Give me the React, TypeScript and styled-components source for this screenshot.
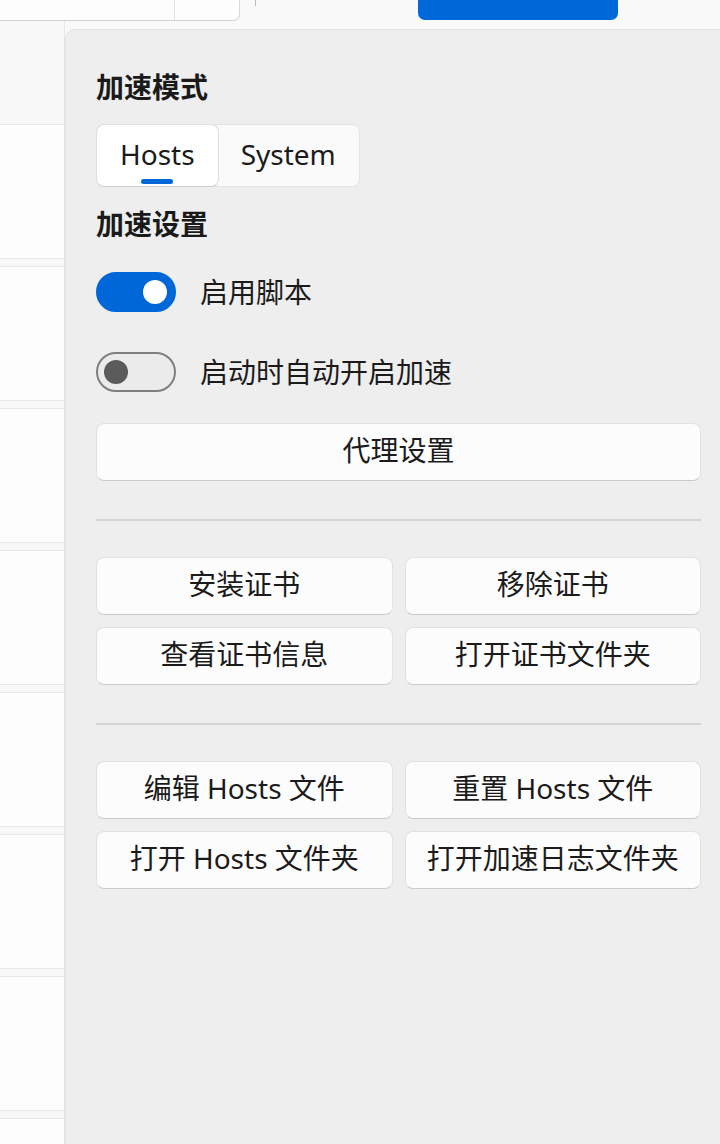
import React, { FC, useState } from "react";
import styled, { createGlobalStyle } from "styled-components";

const GlobalStyle = createGlobalStyle`
  html, body {
    margin: 0;
    padding: 0;
    background: #f9f9f9;
  }
  body {
    font-family: "Noto Sans", "Noto Sans CJK SC", sans-serif;
    color: #1b1b1b;
  }
  * {
    box-sizing: border-box;
  }
`;

const CERT_ACTIONS = ["安装证书", "移除证书", "查看证书信息", "打开证书文件夹"];
const HOSTS_ACTIONS = [
  "编辑 Hosts 文件",
  "重置 Hosts 文件",
  "打开 Hosts 文件夹",
  "打开加速日志文件夹",
];

interface ToggleProps {
  on: boolean;
  onToggle: () => void;
}

const Toggle: FC<ToggleProps> = ({ on, onToggle }) => (
  <Track $on={on} onClick={onToggle}>
    <Knob $on={on} />
  </Track>
);

const App: FC = () => {
  const [mode, setMode] = useState<"Hosts" | "System">("Hosts");
  const [scriptOn, setScriptOn] = useState(true);
  const [autoStart, setAutoStart] = useState(false);

  return (
    <>
      <GlobalStyle />
      <Page>
        <TopBar>
          <SearchBox>
            <SearchField />
          </SearchBox>
          <ToolSep />
          <PrimaryButton />
        </TopBar>

        <Body>
          <ListColumn>
            <ListHeader />
            {Array.from({ length: 8 }).map((_, i) => (
              <ListCard key={i} />
            ))}
          </ListColumn>

          <Panel>
            <Heading>加速模式</Heading>
            <Segmented>
              {(["Hosts", "System"] as const).map((m) => (
                <Segment
                  key={m}
                  $active={mode === m}
                  onClick={() => setMode(m)}
                >
                  {m}
                  {mode === m && <Indicator />}
                </Segment>
              ))}
            </Segmented>

            <Heading $top={20}>加速设置</Heading>
            <ToggleRow $top={31}>
              <Toggle on={scriptOn} onToggle={() => setScriptOn(!scriptOn)} />
              <span>启用脚本</span>
            </ToggleRow>
            <ToggleRow $top={40}>
              <Toggle on={autoStart} onToggle={() => setAutoStart(!autoStart)} />
              <span>启动时自动开启加速</span>
            </ToggleRow>

            <WideButton>代理设置</WideButton>

            <Divider />
            <ButtonGrid>
              {CERT_ACTIONS.map((label) => (
                <ActionButton key={label}>{label}</ActionButton>
              ))}
            </ButtonGrid>

            <Divider />
            <ButtonGrid>
              {HOSTS_ACTIONS.map((label) => (
                <ActionButton key={label}>{label}</ActionButton>
              ))}
            </ButtonGrid>
          </Panel>
        </Body>
      </Page>
    </>
  );
};

export default App;

const Page = styled.div`
  height: 100vh;
  display: flex;
  flex-direction: column;
  background: #f9f9f9;
  overflow: hidden;
`;

const TopBar = styled.div`
  height: 21px;
  display: flex;
  align-items: flex-end;
  overflow: hidden;
  flex-shrink: 0;
`;

const SearchBox = styled.div`
  width: 240px;
  height: 44px;
  display: flex;
  background: #fdfdfd;
  border-right: 1px solid #d9d9d9;
  border-bottom: 1px solid #d3d3d3;
  border-bottom-right-radius: 7px;
`;

const SearchField = styled.div`
  flex: 0 0 175px;
  border-right: 1px solid #e0e0e0;
`;

const ToolSep = styled.div`
  align-self: flex-start;
  width: 1px;
  height: 6px;
  margin-left: 15px;
  background: #bcbcbc;
`;

const PrimaryButton = styled.div`
  width: 200px;
  height: 44px;
  margin-left: 162px;
  margin-bottom: 1px;
  background: #0069d9;
  border-radius: 7px;
`;

const Body = styled.div`
  flex: 1;
  min-height: 0;
  display: flex;
  align-items: stretch;
`;

const ListColumn = styled.div`
  width: 65px;
  flex-shrink: 0;
  display: flex;
  flex-direction: column;
  gap: 7px;
  overflow: hidden;
  background: #f8f8f8;
  border-right: 1px solid #e6e6e6;
`;

const ListHeader = styled.div`
  height: 96px;
  flex-shrink: 0;
`;

const ListCard = styled.div`
  height: 135px;
  flex-shrink: 0;
  background: #fdfdfd;
  border-top: 1px solid #e8e8e8;
  border-bottom: 1px solid #e8e8e8;
`;

const Panel = styled.div`
  flex: 1;
  margin-top: 8px;
  padding: 40px 19px 40px 30px;
  background: #eeeeee;
  border-top: 1px solid #e0e0e0;
  border-left: 1px solid #e0e0e0;
  border-top-left-radius: 10px;
  display: flex;
  flex-direction: column;
  align-items: flex-start;
`;

const Heading = styled.h2<{ $top?: number }>`
  margin: ${(p) => p.$top ?? 0}px 0 0;
  font-size: 28px;
  line-height: 34px;
  font-weight: 700;
  color: #1a1a1a;
`;

const Segmented = styled.div`
  margin-top: 20px;
  height: 63px;
  display: flex;
  background: #fafafa;
  border: 1px solid #e3e3e3;
  border-radius: 8px;
`;

const Segment = styled.div<{ $active: boolean }>`
  position: relative;
  display: flex;
  align-items: center;
  justify-content: center;
  padding: 0 23px 4px;
  margin: -1px;
  font-size: 28px;
  color: #1b1b1b;
  cursor: pointer;
  border-radius: 8px;
  border: 1px solid ${(p) => (p.$active ? "#dedede" : "transparent")};
  border-bottom-color: ${(p) => (p.$active ? "#cfcfcf" : "transparent")};
  background: ${(p) => (p.$active ? "#fefefe" : "transparent")};
`;

const Indicator = styled.span`
  position: absolute;
  left: 50%;
  bottom: 2px;
  width: 32px;
  height: 5px;
  margin-left: -16px;
  border-radius: 3px;
  background: #0067d9;
`;

const ToggleRow = styled.label<{ $top: number }>`
  margin-top: ${(p) => p.$top}px;
  display: flex;
  align-items: center;
  gap: 24px;
  font-size: 28px;
  line-height: 40px;
  color: #1b1b1b;
`;

const Track = styled.span<{ $on: boolean }>`
  width: 80px;
  height: 40px;
  border-radius: 20px;
  display: flex;
  align-items: center;
  padding: 0 7px 0 6px;
  justify-content: ${(p) => (p.$on ? "flex-end" : "flex-start")};
  background: ${(p) => (p.$on ? "#0067d9" : "#ebebeb")};
  border: 2px solid ${(p) => (p.$on ? "#0067d9" : "#7f7f7f")};
  cursor: pointer;
`;

const Knob = styled.span<{ $on: boolean }>`
  width: 24px;
  height: 24px;
  border-radius: 50%;
  background: ${(p) => (p.$on ? "#ffffff" : "#5b5b5b")};
`;

const ButtonBase = styled.button`
  height: 58px;
  padding: 0 12px 4px;
  font-family: inherit;
  font-size: 28px;
  line-height: 34px;
  color: #1b1b1b;
  background: #fcfcfc;
  border: 1px solid #e1e1e1;
  border-bottom-color: #cacaca;
  border-radius: 8px;
  cursor: pointer;
  white-space: nowrap;
`;

const WideButton = styled(ButtonBase)`
  margin-top: 31px;
  width: 100%;
`;

const ActionButton = styled(ButtonBase)`
  width: 100%;
`;

const Divider = styled.hr`
  align-self: stretch;
  margin: 38px 0 36px;
  height: 2px;
  border: none;
  background: #d4d4d4;
`;

const ButtonGrid = styled.div`
  width: 100%;
  display: grid;
  grid-template-columns: 1fr 1fr;
  gap: 12px 12px;
`;
